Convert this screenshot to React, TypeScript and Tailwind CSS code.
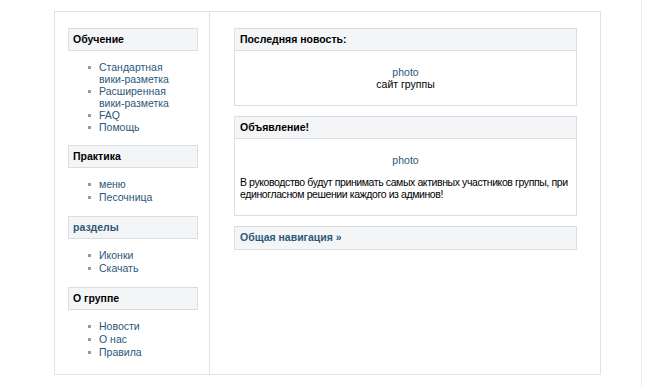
import React from "react";

const LINK = "text-[#2b587a]";

function Section({ title, items, link, leading }: { title: string; items: string[][]; link?: boolean; leading: string }) {
  return (
    <div>
      <div className={`h-[23px] border border-[#dadde1] bg-[#f4f5f7] pl-[4px] flex items-center font-bold ${link ? LINK : "text-black"}`}>
        {title}
      </div>
      <ul className={`mt-[10px] pl-[20px] ${leading}`}>
        {items.map((lines, i) => (
          <li key={i} className="flex">
            <span className="w-[11px] shrink-0 flex">
              <span className="mt-[5px] w-[3px] h-[3px] bg-[#9a9a9a]" />
            </span>
            <span className={LINK}>
              {lines.map((l, j) => (
                <div key={j}>{l}</div>
              ))}
            </span>
          </li>
        ))}
      </ul>
    </div>
  );
}

function Box({ title, children, link }: { title: string; children?: React.ReactNode; link?: boolean }) {
  return (
    <div className="border border-[#dadde1]">
      <div className={`h-[22px] bg-[#f4f5f7] pl-[5px] flex items-center font-bold ${link ? LINK : "text-black"} ${children ? "border-b border-[#dadde1]" : ""}`}>
        {title}
      </div>
      {children}
    </div>
  );
}

export default function App() {
  return (
    <div
      className="w-[652px] h-[387px] bg-white flex text-[10.5px] text-black overflow-hidden"
      style={{ fontFamily: "'Liberation Sans', Arial, sans-serif" }}
    >
      <div className="ml-[54px] mt-[11px] w-[547px] h-[364px] border border-[#e2e2e2] flex shrink-0">
        <div className="w-[155px] shrink-0 border-r border-[#e2e2e2] pt-[16px] pl-[13px] pr-[11px] flex flex-col gap-[12px]">
          <Section
            title="Обучение"
            leading="leading-[12px]"
            items={[["Стандартная", "вики-разметка"], ["Расширенная", "вики-разметка"], ["FAQ"], ["Помощь"]]}
          />
          <Section title="Практика" leading="leading-[13px]" items={[["меню"], ["Песочница"]]} />
          <Section title="разделы" link leading="leading-[13px]" items={[["Иконки"], ["Скачать"]]} />
          <Section title="О группе" leading="leading-[13px]" items={[["Новости"], ["О нас"], ["Правила"]]} />
        </div>
        <div className="flex-1 pt-[16px] pl-[24px] pr-[23px] flex flex-col gap-[10px]">
          <Box title="Последняя новость:">
            <div className="py-[15px] text-center leading-[12px]">
              <div className={LINK}>photo</div>
              <div>сайт группы</div>
            </div>
          </Box>
          <Box title="Объявление!">
            <div className="pt-[15px] pb-[15px] px-[5px] leading-[12px]">
              <div className={`text-center ${LINK}`}>photo</div>
              <div className="mt-[10px] tracking-[-0.4px]">
                В руководство будут принимать самых активных участников группы, при единогласном решении каждого из админов!
              </div>
            </div>
          </Box>
          <Box title="Общая навигация »" link />
        </div>
      </div>
      <div className="ml-[40px] w-px h-full bg-[#ececec]" />
    </div>
  );
}
